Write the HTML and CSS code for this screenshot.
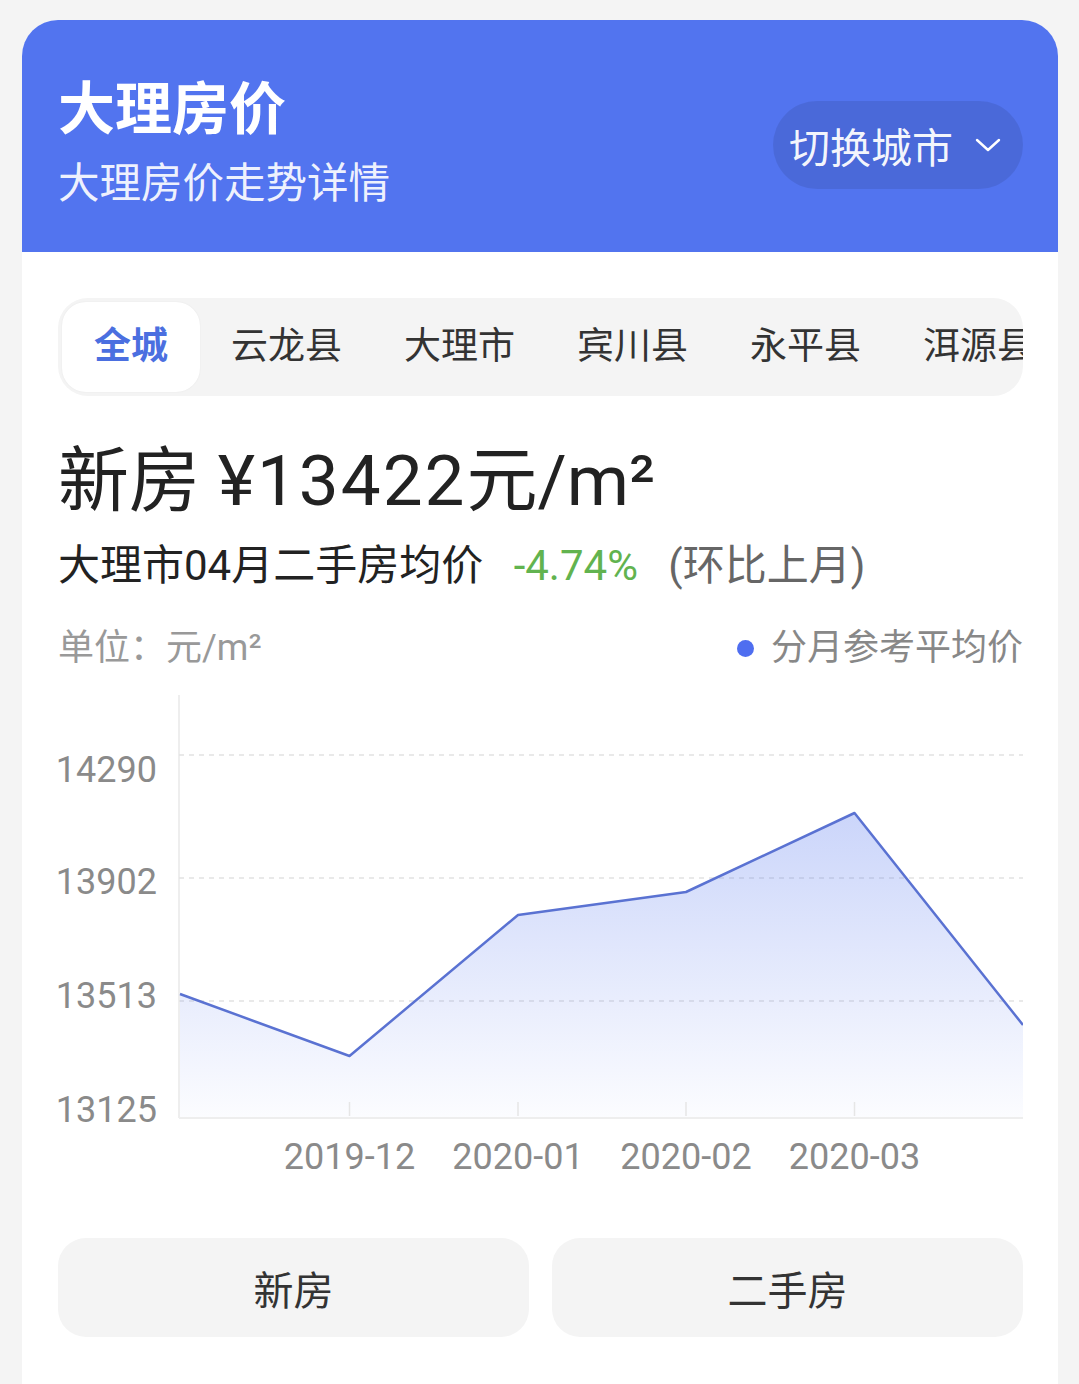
FILE: index.html
```html
<!DOCTYPE html>
<html lang="zh-CN">
<head>
    <meta charset="UTF-8">
    <meta name="viewport" content="width=device-width, initial-scale=1.0">
    <title>大理房价</title>
    <link rel="stylesheet" href="styles.css">
</head>
<body>

    <div class="card">
        <div class="header">
            <div class="header-text">
                <h1 class="title">大理房价</h1>
                <div class="subtitle">大理房价走势详情</div>
            </div>
            <div class="city-switch">
                <span>切换城市</span>
                <svg class="chevron" width="26" height="16" viewBox="0 0 26 16">
                    <polyline points="2,3 13,13 24,3" fill="none" stroke="#fff" stroke-width="2.4" stroke-linecap="round" stroke-linejoin="round"/>
                </svg>
            </div>
        </div>

        <div class="body">
            <div class="tabs">
                <div class="tab active">全城</div>
                <div class="tab">云龙县</div>
                <div class="tab">大理市</div>
                <div class="tab">宾川县</div>
                <div class="tab">永平县</div>
                <div class="tab">洱源县</div>
            </div>

            <div class="price">新房 <span class="amount">¥13422</span>元/m²</div>
            <div class="summary">
                大理市04月二手房均价
                <span class="change">-4.74%</span>
                <span class="compare">(环比上月)</span>
            </div>

            <div class="chart-head">
                <span class="unit">单位：元/m²</span>
                <span class="legend"><i class="dot"></i>分月参考平均价</span>
            </div>

            <svg class="chart" width="965" height="495" viewBox="0 0 965 495">
                <defs>
                    <linearGradient id="area" x1="0" y1="0" x2="0" y2="1">
                        <stop offset="0" stop-color="#5274ef" stop-opacity="0.30"/>
                        <stop offset="1" stop-color="#5274ef" stop-opacity="0.02"/>
                    </linearGradient>
                </defs>
                <!-- grid -->
                <line x1="121" y1="5" x2="121" y2="428" stroke="#eeeeee" stroke-width="2"/>
                <line x1="121" y1="65" x2="965" y2="65" stroke="#e2e2e2" stroke-width="1.5" stroke-dasharray="5 5"/>
                <line x1="121" y1="188" x2="965" y2="188" stroke="#e2e2e2" stroke-width="1.5" stroke-dasharray="5 5"/>
                <line x1="121" y1="311" x2="965" y2="311" stroke="#e2e2e2" stroke-width="1.5" stroke-dasharray="5 5"/>
                <!-- area + line -->
                <polygon points="122,304 291.5,366 460,225 628,202 796.5,123 965,335 965,428 122,428" fill="url(#area)"/>
                <polyline points="122,304 291.5,366 460,225 628,202 796.5,123 965,335" fill="none" stroke="#5a72d2" stroke-width="2.5" stroke-linejoin="round"/>
                <line x1="121" y1="428" x2="965" y2="428" stroke="#eeeeee" stroke-width="2"/>
                <g stroke="#e6e6e6" stroke-width="1.5">
                    <line x1="291.5" y1="412" x2="291.5" y2="426"/>
                    <line x1="460" y1="412" x2="460" y2="426"/>
                    <line x1="628" y1="412" x2="628" y2="426"/>
                    <line x1="796.5" y1="412" x2="796.5" y2="426"/>
                </g>
                <!-- y labels -->
                <g class="axis-label" text-anchor="end">
                    <text x="99" y="92">14290</text>
                    <text x="99" y="204">13902</text>
                    <text x="99" y="318">13513</text>
                    <text x="99" y="432">13125</text>
                </g>
                <!-- x labels -->
                <g class="axis-label" text-anchor="middle">
                    <text x="291.5" y="479">2019-12</text>
                    <text x="460" y="479">2020-01</text>
                    <text x="628" y="479">2020-02</text>
                    <text x="796.5" y="479">2020-03</text>
                </g>
            </svg>

            <div class="switch">
                <button class="switch-btn">新房</button>
                <button class="switch-btn">二手房</button>
            </div>
        </div>
    </div>

</body>
</html>
```

FILE: styles.css
```css
body {
    margin: 0;
    background-color: #f4f4f4;
    font-family: Roboto, "Noto Sans CJK SC", sans-serif;
    color: #333;
}
.card {
    width: 1036px;
    margin: 20px 0 0 22px;
    background: #ffffff;
    border-radius: 36px 36px 0 0;
    overflow: hidden;
}
.header {
    display: flex;
    justify-content: space-between;
    align-items: center;
    height: 232px;
    box-sizing: border-box;
    padding: 0 35px 0 36px;
    background-color: #5274ef;
    color: #ffffff;
}
.header-text {
    padding-top: 14px;
}
.title {
    margin: 0;
    font-size: 57px;
    line-height: 64px;
    font-weight: bold;
}
.subtitle {
    margin-top: 17px;
    font-size: 41.5px;
    line-height: 50px;
    color: rgba(255, 255, 255, 0.92);
}
.city-switch {
    display: flex;
    align-items: center;
    gap: 22px;
    height: 88px;
    margin-top: 17px;
    padding: 0 22px 0 16px;
    border-radius: 44px;
    background-color: rgba(0, 0, 0, 0.09);
    font-size: 41px;
    color: rgba(255, 255, 255, 0.95);
}
.body {
    padding: 46px 35px 60px 36px;
}
.tabs {
    display: flex;
    padding: 4px;
    border-radius: 30px;
    background-color: #f4f4f4;
    overflow: hidden;
}
.tab {
    flex-shrink: 0;
    height: 90px;
    line-height: 90px;
    padding: 0 31px;
    font-size: 37px;
    white-space: nowrap;
    color: #333;
}
.tab.active {
    padding: 0 32px;
    border-radius: 24px;
    background-color: #ffffff;
    box-shadow: 0 0 2px rgba(0, 0, 0, 0.06);
    color: #4b6fe0;
    font-weight: bold;
}
.price {
    margin-top: 45px;
    font-size: 71px;
    line-height: 80px;
    color: #222;
}
.amount {
    letter-spacing: 2px;
}
.summary {
    margin-top: 20px;
    font-size: 42px;
    line-height: 50px;
    color: #222;
}
.change {
    margin-left: 20px;
    color: #62b34f;
}
.compare {
    margin-left: 20px;
    color: #666;
}
.chart-head {
    display: flex;
    justify-content: space-between;
    align-items: center;
    margin-top: 35px;
    font-size: 36px;
    line-height: 44px;
}
.unit {
    color: #999;
}
.legend {
    display: flex;
    align-items: center;
    color: #888;
}
.dot {
    width: 17px;
    height: 17px;
    margin-right: 17px;
    border-radius: 50%;
    background-color: #4f6ef0;
}
.chart {
    display: block;
    margin-top: 20px;
}
.axis-label {
    font-family: Roboto, "Noto Sans CJK SC", sans-serif;
    font-size: 36px;
    fill: #8a8a8a;
}
.switch {
    display: flex;
    gap: 23px;
    margin-top: 53px;
}
.switch-btn {
    flex: 1;
    height: 99px;
    border: none;
    border-radius: 28px;
    background-color: #f4f4f4;
    font-family: Roboto, "Noto Sans CJK SC", sans-serif;
    font-size: 40px;
    color: #333;
}
```
